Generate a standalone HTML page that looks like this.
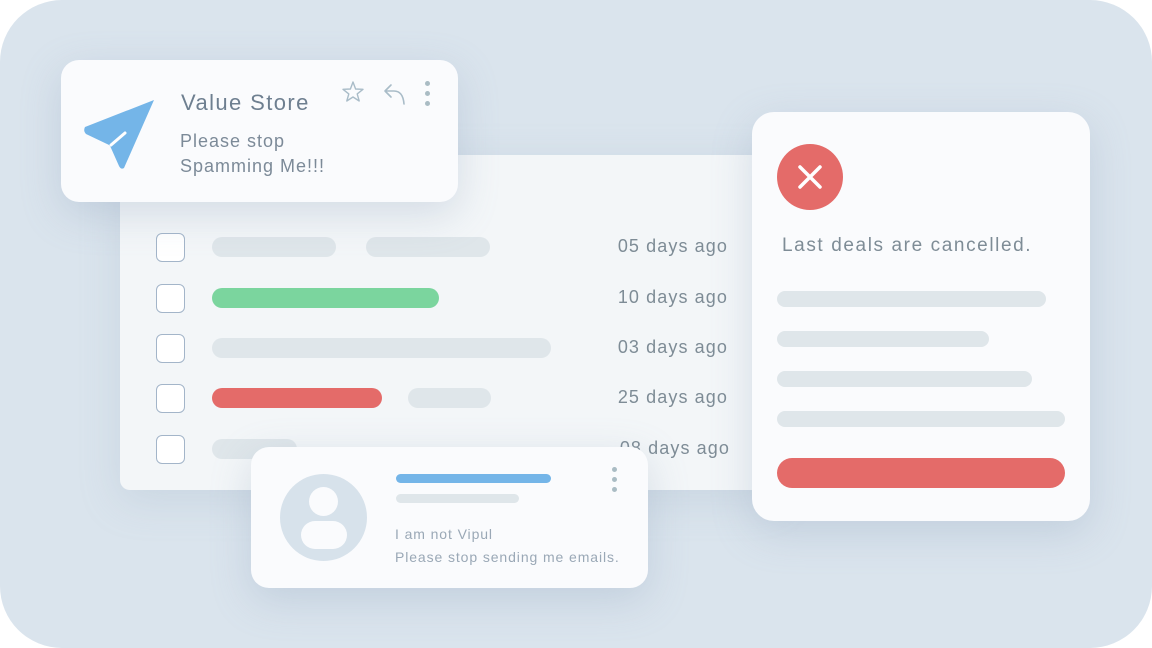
<!DOCTYPE html>
<html><head><meta charset="utf-8"><style>
*{margin:0;padding:0;box-sizing:border-box}
body{width:1152px;height:648px;background:#fff;position:relative;overflow:hidden;font-family:"Liberation Sans",sans-serif}
.bg{position:absolute;left:0;top:0;width:1152px;height:648px;background:#dae4ed;border-radius:62px}
.abs{position:absolute}
.panel{left:120px;top:155px;width:660px;height:335px;background:#f3f6f8;border-radius:10px;box-shadow:0 10px 40px rgba(150,170,190,.25)}
.cb{position:absolute;left:156px;width:29px;height:29px;border:1.5px solid #a3b5c9;border-radius:6px;background:#fff}
.bar{position:absolute;height:20px;border-radius:10px;background:#dfe6ea}
.date{position:absolute;font-size:18px;color:#7e8c96;width:160px;text-align:right;left:568px;letter-spacing:1.1px}
.card{background:#fafbfd;border-radius:18px;box-shadow:0 12px 40px rgba(140,160,185,.3)}
</style></head><body>
<div class="bg"></div>
<div class="abs panel"></div>

<div class="cb" style="top:233px"></div>
<div class="cb" style="top:284px"></div>
<div class="cb" style="top:334px"></div>
<div class="cb" style="top:384px"></div>
<div class="cb" style="top:435px"></div>

<div class="bar" style="left:212px;top:237px;width:124px"></div>
<div class="bar" style="left:366px;top:237px;width:124px"></div>
<div class="bar" style="left:212px;top:288px;width:227px;background:#7bd59e"></div>
<div class="bar" style="left:212px;top:338px;width:339px"></div>
<div class="bar" style="left:212px;top:388px;width:170px;background:#e46b69"></div>
<div class="bar" style="left:408px;top:388px;width:83px"></div>
<div class="bar" style="left:212px;top:439px;width:85px"></div>

<div class="date" style="top:236px">05 days ago</div>
<div class="date" style="top:287px">10 days ago</div>
<div class="date" style="top:337px">03 days ago</div>
<div class="date" style="top:387px">25 days ago</div>
<div class="date" style="top:438px;left:570px">08 days ago</div>

<!-- top card -->
<div class="abs card" style="left:61px;top:60px;width:397px;height:142px">
  <svg class="abs" style="left:22px;top:36px" width="74" height="74" viewBox="0 0 74 74">
    <path d="M2 31 L71 4 L41 72 Q38 74 36 70 L28 52 Q27 49 24 48 L3 38 Q0 35 2 31Z" fill="#74b5e8"/>
    <path d="M28 49 L42 37" stroke="#fff" stroke-width="3" stroke-linecap="round"/>
  </svg>
  <div class="abs" style="left:120px;top:30px;font-size:22px;color:#6e7f90;letter-spacing:1.4px">Value Store</div>
  <div class="abs" style="left:119px;top:69px;font-size:18px;line-height:25px;color:#7c8a98;letter-spacing:1px">Please stop<br>Spamming Me!!!</div>
  <svg class="abs" style="left:280px;top:20px" width="24" height="24" viewBox="0 0 24 24"><path d="M12 2 L14.6 9 L22 9.3 L16.2 13.9 L18.2 21 L12 17 L5.8 21 L7.8 13.9 L2 9.3 L9.4 9Z" fill="none" stroke="#a9bcc8" stroke-width="1.4" stroke-linejoin="round"/></svg>
  <svg class="abs" style="left:322px;top:22px" width="24" height="24" viewBox="0 0 24 24"><path d="M8 3 L2 9 L8 15 M2 9 H11 Q20 9 21 22" fill="none" stroke="#a9bcc8" stroke-width="1.6" stroke-linecap="round" stroke-linejoin="round"/></svg>
  <div class="abs" style="left:364px;top:21px;width:5px;height:5px;border-radius:50%;background:#aabcc4;box-shadow:0 10px 0 #aabcc4,0 20px 0 #aabcc4"></div>
</div>

<!-- bottom card -->
<div class="abs card" style="left:251px;top:447px;width:397px;height:141px">
  <div class="abs" style="left:29px;top:27px;width:87px;height:87px;border-radius:50%;background:#d7e2eb"></div>
  <div class="abs" style="left:58px;top:40px;width:29px;height:29px;border-radius:50%;background:#fafbfd"></div>
  <div class="abs" style="left:50px;top:74px;width:46px;height:28px;border-radius:14px;background:#fafbfd"></div>
  <div class="abs" style="left:145px;top:27px;width:155px;height:9px;border-radius:5px;background:#74b5e8"></div>
  <div class="abs" style="left:145px;top:47px;width:123px;height:9px;border-radius:5px;background:#dfe6ea"></div>
  <div class="abs" style="left:144px;top:76px;font-size:14px;line-height:23px;color:#9aa8b6;letter-spacing:0.9px">I am not Vipul<br>Please stop sending me emails.</div>
  <div class="abs" style="left:361px;top:20px;width:5px;height:5px;border-radius:50%;background:#aabcc4;box-shadow:0 10px 0 #aabcc4,0 20px 0 #aabcc4"></div>
</div>

<!-- right card -->
<div class="abs card" style="left:752px;top:112px;width:338px;height:409px;border-radius:22px">
  <div class="abs" style="left:25px;top:32px;width:66px;height:66px;border-radius:50%;background:#e46b69"></div>
  <svg class="abs" style="left:25px;top:32px" width="66" height="66"><path d="M23 23 L43 43 M43 23 L23 43" stroke="#fff" stroke-width="3.5" stroke-linecap="round"/></svg>
  <div class="abs" style="left:30px;top:123px;font-size:19px;color:#7e8c96;letter-spacing:1.6px">Last deals are cancelled.</div>
  <div class="abs" style="left:25px;top:179px;width:269px;height:16px;border-radius:8px;background:#dfe6ea"></div>
  <div class="abs" style="left:25px;top:219px;width:212px;height:16px;border-radius:8px;background:#dfe6ea"></div>
  <div class="abs" style="left:25px;top:259px;width:255px;height:16px;border-radius:8px;background:#dfe6ea"></div>
  <div class="abs" style="left:25px;top:299px;width:288px;height:16px;border-radius:8px;background:#dfe6ea"></div>
  <div class="abs" style="left:25px;top:346px;width:288px;height:30px;border-radius:15px;background:#e46b69"></div>
</div>
</body></html>
